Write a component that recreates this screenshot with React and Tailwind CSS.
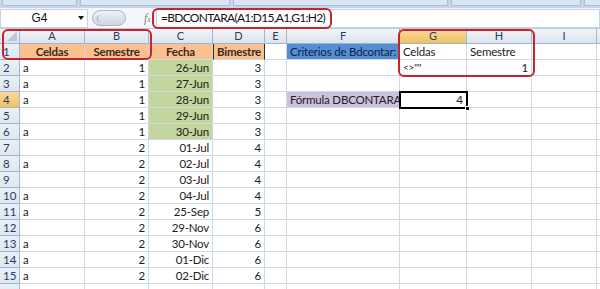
import React from 'react';

const cols = [
    { key: 'A', w: 65 },
    { key: 'B', w: 64 },
    { key: 'C', w: 64 },
    { key: 'D', w: 52 },
    { key: 'E', w: 22 },
    { key: 'F', w: 113 },
    { key: 'G', w: 67 },
    { key: 'H', w: 65 },
    { key: 'I', w: 65 },
    { key: 'J', w: 40 },
];

const fechas = ['26-Jun', '27-Jun', '28-Jun', '29-Jun', '30-Jun', '01-Jul', '02-Jul', '03-Jul', '04-Jul', '25-Sep', '29-Nov', '30-Nov', '01-Dic', '02-Dic'];
const celdas = ['a', 'a', 'a', '', 'a', '', 'a', '', 'a', 'a', '', 'a', 'a', 'a'];
const semestre = [1, 1, 1, 1, 1, 2, 2, 2, 2, 2, 2, 2, 2, 2];
const bimestre = [3, 3, 3, 3, 3, 4, 4, 4, 4, 5, 6, 6, 6, 6];

// build cell content per row / column
const cellFor = (r, c) => {
    if (r === 1) {
        const head = { A: 'Celdas', B: 'Semestre', C: 'Fecha', D: 'Bimestre' };
        if (head[c]) {
            return { text: head[c], cls: 'bg-[#fac090] font-bold justify-center text-[#3a2a1a]' };
        }
        if (c === 'F') return { text: 'Criterios de Bdcontar:', cls: 'bg-[#558ed5] text-[#0f2440] pl-[3px]' };
        if (c === 'G') return { text: 'Celdas', cls: 'pl-[3px]' };
        if (c === 'H') return { text: 'Semestre', cls: 'pl-[3px]' };
        return null;
    }
    const i = r - 2;
    if (i < 14) {
        if (c === 'A') return { text: celdas[i], cls: 'pl-[3px]' };
        if (c === 'B') return { text: semestre[i], cls: 'justify-end pr-[3px]' };
        if (c === 'C') return { text: fechas[i], cls: `justify-end pr-[3px] ${i < 5 ? 'bg-[#c3d69b]' : ''}` };
        if (c === 'D') return { text: bimestre[i], cls: 'justify-end pr-[3px]' };
    }
    if (r === 2 && c === 'G') return { text: '<>""', cls: 'pl-[3px] text-[10px]' };
    if (r === 2 && c === 'H') return { text: '1', cls: 'justify-end pr-[3px]' };
    if (r === 4 && c === 'F') return { text: 'Fórmula DBCONTARA', cls: 'bg-[#ccc0da] pl-[3px]' };
    return null;
};

const App = () => {
    const rows = Array.from({ length: 16 }, (_, k) => k + 1);

    return (
        <div className="w-[600px] h-[289px] overflow-hidden bg-white relative text-[#222] text-[11.5px]" style={{ fontFamily: 'Lato, "Open Sans", sans-serif' }}>
            {/* ribbon group labels, cut off at the top */}
            <div className="h-[8px] bg-[#c5d6ec] flex gap-[3px] px-[2px] overflow-hidden">
                {[75, 150, 215, 130, 40].map((w, k) => (
                    <div key={k} className="h-[6px] bg-[#dbe6f4] border border-t-0 border-[#a9bfd9] rounded-b-[2px] flex-none" style={{ width: w }} />
                ))}
            </div>

            {/* formula bar */}
            <div className="h-[21px] flex items-center bg-[#f3f6fb] border-b border-[#b8c9e0]">
                <div className="w-[88px] h-[19px] bg-white border border-[#c6d3e4] flex items-center relative">
                    <span className="flex-1 text-center text-[12px] text-[#111]" style={{ fontFamily: '"Liberation Sans", sans-serif' }}>G4</span>
                    <span className="w-0 h-0 border-l-[3px] border-r-[3px] border-t-[4px] border-l-transparent border-r-transparent border-t-[#111] mr-[3px]" />
                </div>
                <div className="ml-[4px] w-[34px] h-[16px] rounded-full bg-gradient-to-b from-[#eef2f7] to-[#cdd6e2] border border-[#aab8ca] flex items-center pl-[4px]">
                    <div className="w-[7px] h-[7px] rounded-full border-l border-[#a0aabb]" />
                </div>
                <div className="ml-[18px] text-[#8a8a8a] italic text-[12px]" style={{ fontFamily: '"Liberation Serif", serif' }}>f<span className="text-[8px]">x</span></div>
                <div className="ml-[5px] flex-1 h-[19px] bg-white border border-[#c6d3e4] flex items-center pl-[4px] text-[12px] tracking-[-0.7px] text-[#111]" style={{ fontFamily: 'Lato, sans-serif' }}>
                    =BDCONTARA(A1:D15,A1,G1:H2)
                </div>
            </div>

            {/* column headers */}
            <div className="flex h-[15px] bg-gradient-to-b from-[#f3f6fa] to-[#dbe3ee] border-b border-[#9eb6ce]">
                <div className="w-[20px] flex-none border-r border-[#9eb6ce] relative">
                    <div className="absolute right-[2px] bottom-[2px] w-0 h-0" style={{ borderBottom: '10px solid #b9c9dc', borderLeft: '10px solid transparent' }} />
                </div>
                {cols.map((c) => (
                    <div
                        key={c.key}
                        className={`flex-none flex items-center justify-center border-r border-[#9eb6ce] text-[11px] text-[#27415f] ${c.key === 'G' ? 'bg-gradient-to-b from-[#f9d99f] to-[#f1c15f]' : ''}`}
                        style={{ width: c.w }}
                    >
                        {c.key === 'J' ? '' : c.key}
                    </div>
                ))}
            </div>

            {/* rows */}
            {rows.map((r) => (
                <div key={r} className="flex h-[16px]">
                    <div className={`w-[20px] flex-none flex items-center pl-[3px] border-r border-b border-[#9eb6ce] text-[11.5px] text-[#27415f] ${r === 4 ? 'bg-gradient-to-b from-[#f9d99f] to-[#f1c15f]' : 'bg-gradient-to-b from-[#ebf0f7] to-[#dee6f0]'}`}>
                        {r < 16 ? r : ''}
                    </div>
                    {cols.map((c) => {
                        const cell = cellFor(r, c.key);
                        const dBorder = r === 1 && c.key === 'D' ? 'border-l border-l-[#3a2a1a] border-r-[#3a2a1a]' : 'border-r-[#d0d7e5]';
                        return (
                            <div
                                key={c.key}
                                className={`flex-none flex items-center border-r border-b border-b-[#d0d7e5] whitespace-nowrap overflow-hidden tracking-[-0.2px] ${dBorder} ${cell ? cell.cls : ''}`}
                                style={{ width: c.w }}
                            >
                                {cell ? cell.text : ''}
                            </div>
                        );
                    })}
                </div>
            ))}

            {/* active cell G4 */}
            <div className="absolute left-[399px] top-[91px] w-[69px] h-[18px] border-2 border-black flex items-center justify-end pr-[3px]">
                <span>4</span>
                <div className="absolute right-[-4px] bottom-[-4px] w-[5px] h-[5px] bg-black border border-white" />
            </div>

            {/* red highlight frames */}
            <div className="absolute left-[152px] top-[8px] w-[180px] h-[21px] border-2 border-[#c8242e] rounded-[6px]" />
            <div className="absolute left-[2px] top-[29px] w-[150px] h-[31px] border-2 border-[#c8242e] rounded-[6px]" />
            <div className="absolute left-[398px] top-[29px] w-[137px] h-[48px] border-2 border-[#c8242e] rounded-[6px]" />
        </div>
    );
};

export default App;
